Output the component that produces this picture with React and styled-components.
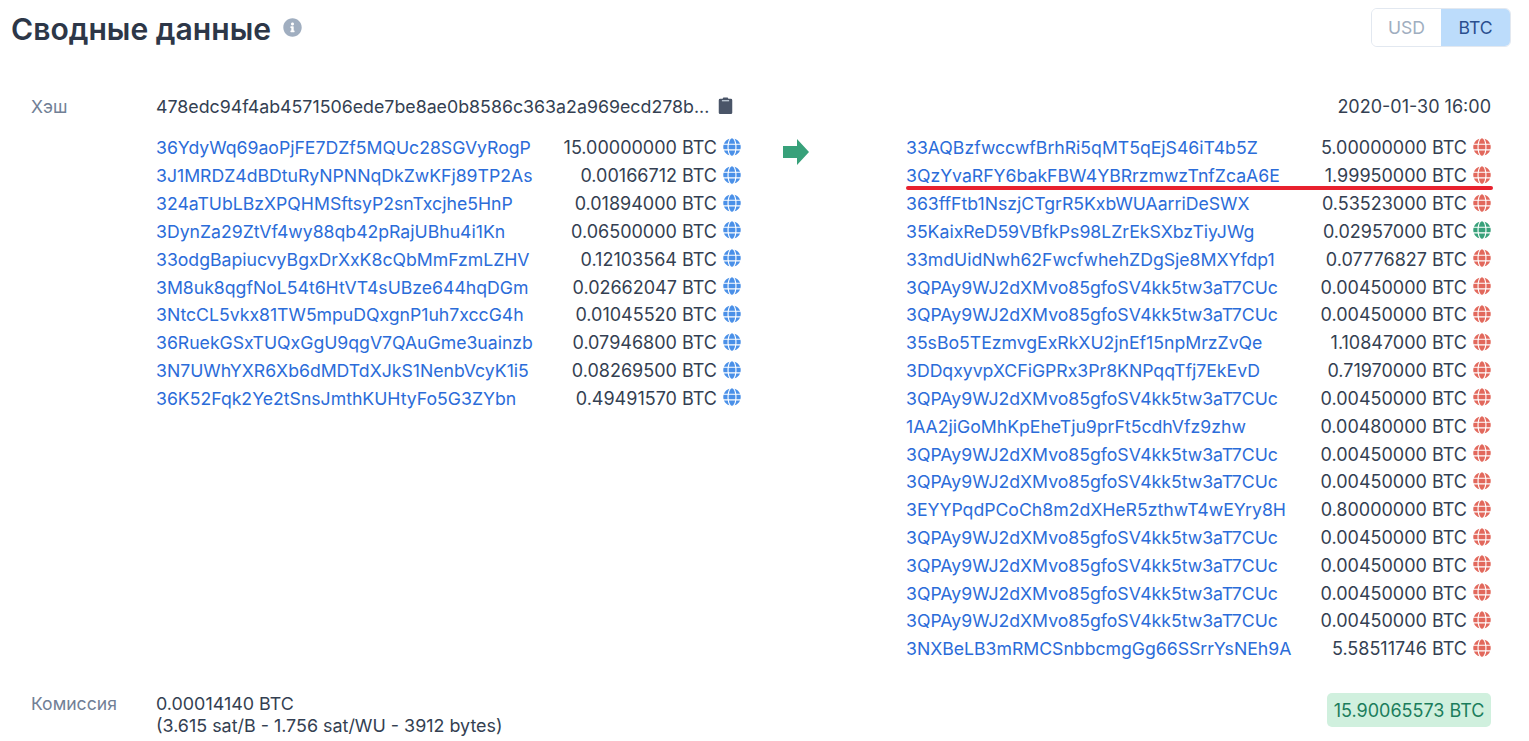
import React from "react";
import styled, { createGlobalStyle } from "styled-components";
import { FaGlobe, FaInfoCircle } from "react-icons/fa";

const inputs = [
  ["36YdyWq69aoPjFE7DZf5MQUc28SGVyRogP", "15.00000000"],
  ["3J1MRDZ4dBDtuRyNPNNqDkZwKFj89TP2As", "0.00166712"],
  ["324aTUbLBzXPQHMSftsyP2snTxcjhe5HnP", "0.01894000"],
  ["3DynZa29ZtVf4wy88qb42pRajUBhu4i1Kn", "0.06500000"],
  ["33odgBapiucvyBgxDrXxK8cQbMmFzmLZHV", "0.12103564"],
  ["3M8uk8qgfNoL54t6HtVT4sUBze644hqDGm", "0.02662047"],
  ["3NtcCL5vkx81TW5mpuDQxgnP1uh7xccG4h", "0.01045520"],
  ["36RuekGSxTUQxGgU9qgV7QAuGme3uainzb", "0.07946800"],
  ["3N7UWhYXR6Xb6dMDTdXJkS1NenbVcyK1i5", "0.08269500"],
  ["36K52Fqk2Ye2tSnsJmthKUHtyFo5G3ZYbn", "0.49491570"],
];

const repeated = "3QPAy9WJ2dXMvo85gfoSV4kk5tw3aT7CUc";

const outputs = [
  ["33AQBzfwccwfBrhRi5qMT5qEjS46iT4b5Z", "5.00000000"],
  ["3QzYvaRFY6bakFBW4YBRrzmwzTnfZcaA6E", "1.99950000", "red", true],
  ["363ffFtb1NszjCTgrR5KxbWUAarriDeSWX", "0.53523000"],
  ["35KaixReD59VBfkPs98LZrEkSXbzTiyJWg", "0.02957000", "green"],
  ["33mdUidNwh62FwcfwhehZDgSje8MXYfdp1", "0.07776827"],
  [repeated, "0.00450000"],
  [repeated, "0.00450000"],
  ["35sBo5TEzmvgExRkXU2jnEf15npMrzZvQe", "1.10847000"],
  ["3DDqxyvpXCFiGPRx3Pr8KNPqqTfj7EkEvD", "0.71970000"],
  [repeated, "0.00450000"],
  ["1AA2jiGoMhKpEheTju9prFt5cdhVfz9zhw", "0.00480000"],
  [repeated, "0.00450000"],
  [repeated, "0.00450000"],
  ["3EYYPqdPCoCh8m2dXHeR5zthwT4wEYry8H", "0.80000000"],
  [repeated, "0.00450000"],
  [repeated, "0.00450000"],
  [repeated, "0.00450000"],
  [repeated, "0.00450000"],
  ["3NXBeLB3mRMCSnbbcmgGg66SSrrYsNEh9A", "5.58511746"],
];

const globeColors = { blue: "#4a90e8", red: "#e2685c", green: "#38a17a" };

function TxRow({ address, value, color = "blue", marked }) {
  return (
    <Row>
      <Address href="#">{address}</Address>
      <Amount>{value} BTC</Amount>
      <Globe $color={globeColors[color]}>
        <FaGlobe />
      </Globe>
      {marked && <RedLine />}
    </Row>
  );
}

export default function App() {
  return (
    <Page>
      <GlobalStyle />
      <Header>
        <TitleWrap>
          <Title>Сводные данные</Title>
          <InfoIcon>
            <FaInfoCircle />
          </InfoIcon>
        </TitleWrap>
        <Toggle>
          <ToggleButton>USD</ToggleButton>
          <ToggleButton $active>BTC</ToggleButton>
        </Toggle>
      </Header>

      <Summary>
        <HashRow>
          <Label>Хэш</Label>
          <Hash>
            478edc94f4ab4571506ede7be8ae0b8586c363a2a969ecd278b...
            <ClipboardIcon viewBox="0 0 16 20">
              <path
                fill="#4a5568"
                d="M5 1.500a1 1 0 0 1 1-1h4a1 1 0 0 1 1 1V2h3a1.500 1.500 0 0 1 1.500 1.500v14A1.500 1.500 0 0 1 14 19H2A1.500 1.500 0 0 1 .5 17.500v-14A1.500 1.500 0 0 1 2 2h3z"
              />
              <rect x="4" y="3.500" width="8" height="1.300" fill="#cbd5e0" />
            </ClipboardIcon>
          </Hash>
          <DateText>2020-01-30 16:00</DateText>
        </HashRow>

        <Transfers>
          <LeftColumn>
            {inputs.map(([address, value]) => (
              <TxRow key={address} address={address} value={value} />
            ))}
          </LeftColumn>
          <ArrowCell>
            <svg width="26" height="26" viewBox="0 0 26 26">
              <path fill="#38a17a" d="M0 7h14V0l12 13-12 13v-7H0z" />
            </svg>
          </ArrowCell>
          <RightColumn>
            {outputs.map(([address, value, color = "red", marked], i) => (
              <TxRow
                key={i}
                address={address}
                value={value}
                color={color}
                marked={marked}
              />
            ))}
          </RightColumn>
        </Transfers>

        <FeeRow>
          <Label>Комиссия</Label>
          <FeeText>
            0.00014140 BTC
            <br />
            (3.615 sat/B - 1.756 sat/WU - 3912 bytes)
          </FeeText>
          <TotalBadge>15.90065573 BTC</TotalBadge>
        </FeeRow>
      </Summary>
    </Page>
  );
}

const GlobalStyle = createGlobalStyle`
  html, body {
    margin: 0;
    background: #fff;
    overflow: hidden;
  }
  body {
    font-family: Inter, "Noto Sans", sans-serif;
    font-size: 17.6px;
    color: #343f52;
  }
`;

const Page = styled.div`
  width: 1529px;
  height: 741px;
  box-sizing: border-box;
  padding: 8px 18px 0 11px;
`;

const Header = styled.div`
  display: flex;
  justify-content: space-between;
  align-items: flex-start;
`;

const TitleWrap = styled.div`
  display: flex;
  align-items: center;
  gap: 12px;
  height: 42px;
`;

const Title = styled.h1`
  margin: 0;
  font-size: 30.1px;
  line-height: 42px;
  font-weight: 600;
  color: #2d3748;
`;

const InfoIcon = styled.span`
  display: flex;
  color: #a0aec0;
  font-size: 19px;
  margin-top: -3px;
`;

const Toggle = styled.div`
  display: flex;
  height: 39px;
  border: 1px solid #e2e8f0;
  border-radius: 6px;
  box-sizing: border-box;
  overflow: hidden;
`;

const ToggleButton = styled.div`
  width: 69px;
  display: flex;
  align-items: center;
  justify-content: center;
  color: ${(p) => (p.$active ? "#2a4f8f" : "#a0aec0")};
  background: ${(p) => (p.$active ? "#bcdcfb" : "#fff")};
`;

const Summary = styled.div`
  margin-top: 42px;
  padding: 0 20px;
`;

const HashRow = styled.div`
  display: flex;
  align-items: center;
  height: 28px;
`;

const Label = styled.div`
  width: 125px;
  flex-shrink: 0;
  color: #718096;
`;

const Hash = styled.div`
  display: flex;
  align-items: center;
  gap: 9px;
  font-size: 17.8px;
  white-space: nowrap;
`;

const ClipboardIcon = styled.svg`
  width: 15px;
  height: 18px;
  margin-top: -1px;
`;

const DateText = styled.div`
  margin-left: auto;
  font-size: 18px;
`;

const Transfers = styled.div`
  display: flex;
  margin-top: 14px;
  padding-left: 125px;
  height: 532px;
`;

const LeftColumn = styled.div`
  width: 585px;
`;

const ArrowCell = styled.div`
  width: 165px;
  padding: 5px 0 0 42px;
  box-sizing: border-box;
`;

const RightColumn = styled.div`
  width: 585px;
`;

const Row = styled.div`
  position: relative;
  display: flex;
  align-items: center;
  height: 27.83px;
`;

const Address = styled.a`
  color: #2b6cd9;
  font-size: 17.65px;
  text-decoration: none;
  white-space: nowrap;
`;

const Amount = styled.span`
  margin-left: auto;
  font-size: 18px;
  white-space: nowrap;
`;

const Globe = styled.span`
  display: flex;
  width: 18px;
  margin-left: 6px;
  font-size: 18px;
  color: ${(p) => p.$color};
  margin-top: -2px;
`;

const RedLine = styled.div`
  position: absolute;
  left: 0;
  right: -2px;
  bottom: 0;
  height: 4px;
  border-radius: 2px;
  background: #e8212e;
`;

const FeeRow = styled.div`
  display: flex;
  align-items: flex-start;
  margin-top: 27px;
`;

const FeeText = styled.div`
  font-size: 17.9px;
  line-height: 22px;
`;

const TotalBadge = styled.div`
  margin-left: auto;
  height: 34px;
  padding: 0 6.5px;
  display: flex;
  align-items: center;
  font-size: 18px;
  border-radius: 5px;
  background: #d0f0de;
  color: #1c7d5c;
`;
